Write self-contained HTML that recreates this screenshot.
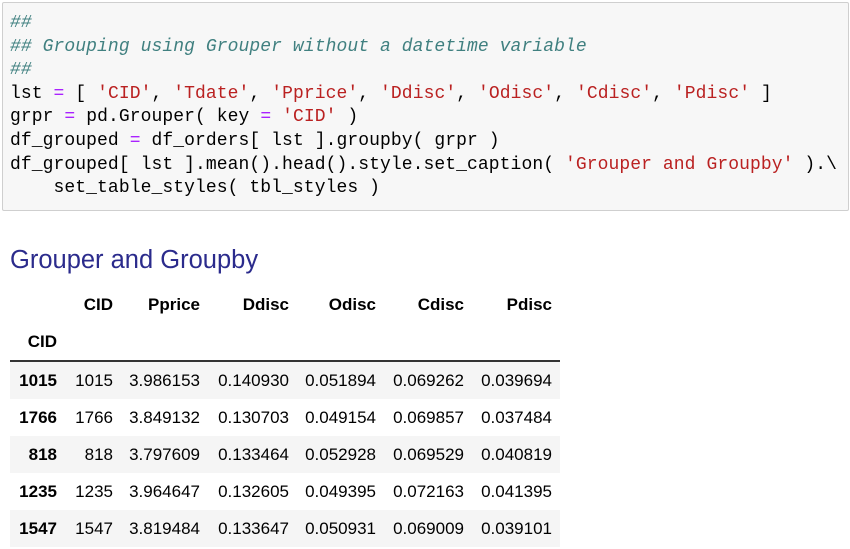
<!DOCTYPE html>
<html><head><style>
body{margin:0;width:850px;height:549px;background:#fff;position:relative;overflow:hidden}
.code{position:absolute;left:2px;top:2px;width:845px;height:207px;background:#f7f7f7;border:1px solid #cfcfcf;border-radius:2px}
pre{margin:0;position:absolute;left:10px;top:12px;font-family:"Liberation Mono",monospace;font-size:18px;letter-spacing:0.08px;line-height:23.6px;color:#000}
.c{color:#408080;font-style:italic}.s{color:#ba2121}.o{color:#aa22ff}
h2{position:absolute;left:10px;top:246px;margin:0;font-family:"Liberation Sans",sans-serif;font-weight:normal;font-size:25.5px;color:#2b2b8c}
.t{position:absolute;left:10px;font-family:"Liberation Sans",sans-serif;font-size:17px;width:550px;height:37px}
.t span{position:absolute;top:0;line-height:37px;transform:translateX(-100%);white-space:nowrap}
.b{font-weight:bold}
</style></head><body>
<div class="code"></div>
<pre><span class="c">##
## Grouping using Grouper without a datetime variable
##</span>
lst <span class="o">=</span> [ <span class="s">'CID'</span>, <span class="s">'Tdate'</span>, <span class="s">'Pprice'</span>, <span class="s">'Ddisc'</span>, <span class="s">'Odisc'</span>, <span class="s">'Cdisc'</span>, <span class="s">'Pdisc'</span> ]
grpr <span class="o">=</span> pd.Grouper( key <span class="o">=</span> <span class="s">'CID'</span> )
df_grouped <span class="o">=</span> df_orders[ lst ].groupby( grpr )
df_grouped[ lst ].mean().head().style.set_caption( <span class="s">'Grouper and Groupby'</span> ).\
    set_table_styles( tbl_styles )</pre>
<h2>Grouper and Groupby</h2>
<div class="t b" style="top:286px"><span style="left:103px">CID</span><span style="left:190px">Pprice</span><span style="left:279px">Ddisc</span><span style="left:366px">Odisc</span><span style="left:454px">Cdisc</span><span style="left:542px">Pdisc</span></div>
<div class="t b" style="top:323px"><span style="left:47px">CID</span></div>
<div style="position:absolute;left:10px;top:360px;width:550px;height:2px;background:#333"></div>
<div class="t" style="top:362px;background:#f5f5f5"><span class="b" style="left:47px">1015</span><span style="left:103px">1015</span><span style="left:190px">3.986153</span><span style="left:279px">0.140930</span><span style="left:366px">0.051894</span><span style="left:454px">0.069262</span><span style="left:542px">0.039694</span></div>
<div class="t" style="top:399px"><span class="b" style="left:47px">1766</span><span style="left:103px">1766</span><span style="left:190px">3.849132</span><span style="left:279px">0.130703</span><span style="left:366px">0.049154</span><span style="left:454px">0.069857</span><span style="left:542px">0.037484</span></div>
<div class="t" style="top:436px;background:#f5f5f5"><span class="b" style="left:47px">818</span><span style="left:103px">818</span><span style="left:190px">3.797609</span><span style="left:279px">0.133464</span><span style="left:366px">0.052928</span><span style="left:454px">0.069529</span><span style="left:542px">0.040819</span></div>
<div class="t" style="top:473px"><span class="b" style="left:47px">1235</span><span style="left:103px">1235</span><span style="left:190px">3.964647</span><span style="left:279px">0.132605</span><span style="left:366px">0.049395</span><span style="left:454px">0.072163</span><span style="left:542px">0.041395</span></div>
<div class="t" style="top:510px;background:#f5f5f5"><span class="b" style="left:47px">1547</span><span style="left:103px">1547</span><span style="left:190px">3.819484</span><span style="left:279px">0.133647</span><span style="left:366px">0.050931</span><span style="left:454px">0.069009</span><span style="left:542px">0.039101</span></div>
</body></html>
